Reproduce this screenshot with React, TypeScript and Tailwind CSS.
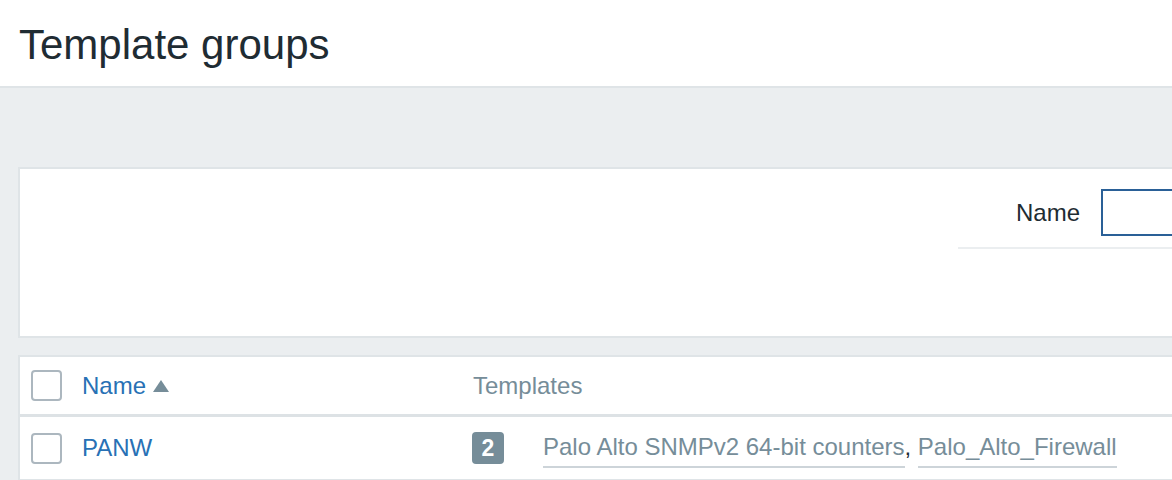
import { FC } from "react";

const font = { fontFamily: '"Liberation Sans", Arial, sans-serif' };

const Checkbox: FC = () => (
  <span className="block w-[31px] h-[31px] rounded-[4px] border-2 border-[#acb7bf] bg-white" />
);

const TemplateLink: FC<{ label: string }> = ({ label }) => (
  <a className="inline-block leading-[27px] pb-[6px] border-b-2 border-[#cdd4d9] text-[#768d99] cursor-pointer">
    {label}
  </a>
);

const App: FC = () => {
  return (
    <div className="w-[1172px] h-[480px] overflow-hidden bg-[#ebeef0] text-[#1f2c33]" style={font}>
      <header className="h-[88px] bg-white border-b-2 border-[#dfe4e7] pl-[19px] pt-[24px]">
        <h1 className="text-[42px] leading-none">Template groups</h1>
      </header>

      <div className="w-[1500px] pl-[18px] pt-[79px]">
        {/* filter */}
        <div className="h-[171px] bg-white border-2 border-[#dfe4e7]">
          <div className="ml-[938px] pt-[20px]">
            <div className="flex items-center pb-[11px] border-b-2 border-[#ebeef0]">
              <label className="w-[122px] text-right text-[24px]">Name</label>
              <input className="ml-[21px] w-[360px] h-[47px] border-2 border-[#2a6097] bg-white outline-none" />
            </div>
          </div>
        </div>

        {/* table */}
        <div className="mt-[17px] bg-white border-2 border-[#dfe4e7] text-[24px]">
          <div className="h-[60px] flex items-center border-b-[3px] border-[#dde2e5]">
            <div className="w-[62px] pl-[11px]">
              <Checkbox />
            </div>
            <div className="w-[391px] flex items-center">
              <a className="text-[#2871b5] cursor-pointer">Name</a>
              <svg width="16" height="12" viewBox="0 0 16 12" className="ml-[7px] mt-[1px]">
                <path d="M8 0L16 12H0Z" fill="#768d99" />
              </svg>
            </div>
            <div className="text-[#768d99]">Templates</div>
          </div>
          <div className="h-[62px] flex items-center">
            <div className="w-[62px] pl-[11px]">
              <Checkbox />
            </div>
            <div className="w-[390px]">
              <a className="text-[#2871b5] cursor-pointer">PANW</a>
            </div>
            <div className="flex items-center">
              <span className="w-[32px] h-[32px] rounded-[4px] bg-[#768d99] text-white text-[23px] font-bold flex items-center justify-center">
                2
              </span>
              <span className="ml-[39px]">
                <TemplateLink label="Palo Alto SNMPv2 64-bit counters" />
                <span>, </span>
                <TemplateLink label="Palo_Alto_Firewall" />
              </span>
            </div>
          </div>
        </div>
      </div>
    </div>
  );
};

export default App;
